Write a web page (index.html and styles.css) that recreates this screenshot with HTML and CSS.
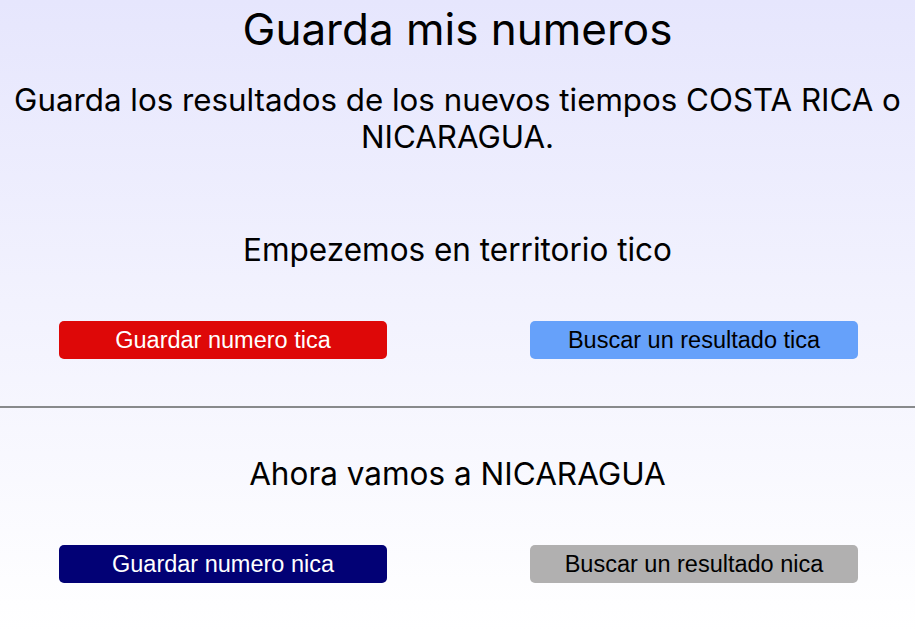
FILE: index.html
```html
<!DOCTYPE html>
<html lang="es">
<head>
<meta charset="utf-8">
<title>Guarda mis numeros</title>
<link rel="stylesheet" href="styles.css">
</head>
<body>
  <header class="intro">
    <h1 class="title">Guarda mis numeros</h1>
    <p class="subtitle">Guarda los resultados de los nuevos tiempos COSTA RICA o NICARAGUA.</p>
  </header>
  <section class="section section-first">
    <h2 class="section-title">Empezemos en territorio tico</h2>
    <div class="actions">
      <button class="btn btn-red">Guardar numero tica</button>
      <button class="btn btn-blue">Buscar un resultado tica</button>
    </div>
  </section>
  <hr class="divider">
  <section class="section section-second">
    <h2 class="section-title">Ahora vamos a NICARAGUA</h2>
    <div class="actions">
      <button class="btn btn-navy">Guardar numero nica</button>
      <button class="btn btn-grey">Buscar un resultado nica</button>
    </div>
  </section>
</body>
</html>
```
FILE: styles.css
```css
html, body {
  margin: 0;
  padding: 0;
}
body {
  min-height: 631px;
  background: linear-gradient(#e6e6fd, #ffffff);
  font-family: Inter, "Noto Sans", sans-serif;
  color: #000;
  text-align: center;
}
.intro {
  padding-top: 4px;
}
.title {
  margin: 0;
  font-size: 44px;
  font-weight: 400;
  line-height: 50px;
}
.subtitle {
  margin: 28px 8px 0;
  font-size: 31.3px;
  line-height: 37px;
}
.section-title {
  margin: 0;
  font-size: 31.5px;
  font-weight: 400;
  line-height: 36px;
}
.section-first {
  padding-top: 76px;
}
.section-second {
  padding-top: 48px;
}
.actions {
  display: flex;
  justify-content: space-between;
  padding: 0 57px 0 59px;
  margin-top: 53px;
}
.btn {
  width: 328px;
  height: 38px;
  border: none;
  border-radius: 5px;
  font-family: "Liberation Sans", Arial, sans-serif;
  font-size: 23.5px;
  padding: 0;
}
.btn-red { background: #de0808; color: #fff; }
.btn-blue { background: #66a1fa; color: #000; }
.btn-navy { background: #020175; color: #fff; }
.btn-grey { background: #b1b0b0; color: #000; }
.divider {
  margin: 47px 0 0;
  border: none;
  border-top: 2px solid #888a8c;
  height: 0;
}
```
